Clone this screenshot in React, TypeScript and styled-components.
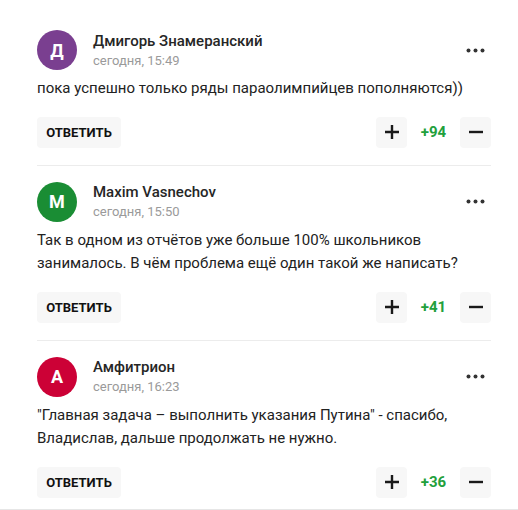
import React from "react";
import styled, { createGlobalStyle } from "styled-components";

const GlobalStyle = createGlobalStyle`
  body {
    margin: 0;
    background: #fff;
    font-family: Roboto, "Noto Sans", Arial, sans-serif;
    color: #222;
  }
`;

const Page = styled.div`
  height: 510px;
  box-sizing: border-box;
  overflow: hidden;
  border-bottom: 1px solid #e6e6e6;
  padding: 14px 27px 0 37px;
`;

const Comment = styled.div`
  padding: 16px 0 17px;
  border-bottom: 1px solid #ececec;
`;

const Header = styled.div`
  display: flex;
  align-items: center;
  margin-bottom: 7px;
`;

const Avatar = styled.div<{ $color: string }>`
  width: 40px;
  height: 40px;
  border-radius: 50%;
  background: ${(p) => p.$color};
  color: #fff;
  display: flex;
  align-items: center;
  justify-content: center;
  font-size: 18px;
  font-weight: 700;
  flex-shrink: 0;
`;

const Meta = styled.div`
  flex: 1;
  margin-left: 16px;
  display: flex;
  flex-direction: column;
  gap: 1px;
`;

const Name = styled.div`
  font-size: 15px;
  font-weight: 500;
  color: #262626;
  line-height: 19px;
`;

const Date = styled.div`
  font-size: 13px;
  color: #9a9a9a;
  line-height: 17px;
`;

const MoreButton = styled.button`
  border: none;
  background: none;
  padding: 0;
  margin-right: 6px;
  display: flex;
  align-items: center;
  cursor: pointer;
`;

const Body = styled.div`
  font-size: 15px;
  line-height: 23.5px;
  color: #222;
  margin-bottom: 16px;
`;

const Actions = styled.div`
  display: flex;
  align-items: center;
  justify-content: space-between;
`;

const ReplyButton = styled.button`
  height: 31px;
  width: 84px;
  border: none;
  border-radius: 4px;
  background: #f7f7f7;
  font-family: inherit;
  font-size: 13px;
  font-weight: 700;
  color: #111;
  padding: 0;
  cursor: pointer;
`;

const Votes = styled.div`
  display: flex;
  align-items: center;
`;

const VoteButton = styled.button`
  width: 31px;
  height: 31px;
  border: none;
  border-radius: 4px;
  background: #f7f7f7;
  display: flex;
  align-items: center;
  justify-content: center;
  padding: 0;
  cursor: pointer;
`;

const Score = styled.span`
  width: 53px;
  text-align: center;
  font-size: 15px;
  font-weight: 700;
  color: #22a03c;
`;

const Dots = () => (
  <svg width="19" height="5" viewBox="0 0 19 5">
    <circle cx="2.5" cy="2.5" r="2" fill="#333" />
    <circle cx="9.5" cy="2.5" r="2" fill="#333" />
    <circle cx="16.5" cy="2.5" r="2" fill="#333" />
  </svg>
);

const Plus = () => (
  <svg width="14" height="14" viewBox="0 0 14 14">
    <path d="M7 0v14M0 7h14" stroke="#1a1a1a" strokeWidth="2.4" />
  </svg>
);

const Minus = () => (
  <svg width="14" height="14" viewBox="0 0 14 14">
    <path d="M0 7h14" stroke="#1a1a1a" strokeWidth="2.4" />
  </svg>
);

const comments = [
  {
    letter: "Д",
    color: "#7a3f90",
    name: "Дмигорь Знамеранский",
    date: "сегодня, 15:49",
    text: "пока успешно только ряды параолимпийцев пополняются))",
    score: "+94",
  },
  {
    letter: "M",
    color: "#1a8d34",
    name: "Maxim Vasnechov",
    date: "сегодня, 15:50",
    text: "Так в одном из отчётов уже больше 100% школьников занималось. В чём проблема ещё один такой же написать?",
    score: "+41",
  },
  {
    letter: "А",
    color: "#cc0136",
    name: "Амфитрион",
    date: "сегодня, 16:23",
    text: "\"Главная задача – выполнить указания Путина\" - спасибо, Владислав, дальше продолжать не нужно.",
    score: "+36",
  },
];

const App = () => {
  return (
    <>
      <GlobalStyle />
      <Page>
        {comments.map((c) => (
          <Comment key={c.date}>
            <Header>
              <Avatar $color={c.color}>{c.letter}</Avatar>
              <Meta>
                <Name>{c.name}</Name>
                <Date>{c.date}</Date>
              </Meta>
              <MoreButton>
                <Dots />
              </MoreButton>
            </Header>
            <Body>{c.text}</Body>
            <Actions>
              <ReplyButton>ОТВЕТИТЬ</ReplyButton>
              <Votes>
                <VoteButton>
                  <Plus />
                </VoteButton>
                <Score>{c.score}</Score>
                <VoteButton>
                  <Minus />
                </VoteButton>
              </Votes>
            </Actions>
          </Comment>
        ))}
      </Page>
    </>
  );
};

export default App;
